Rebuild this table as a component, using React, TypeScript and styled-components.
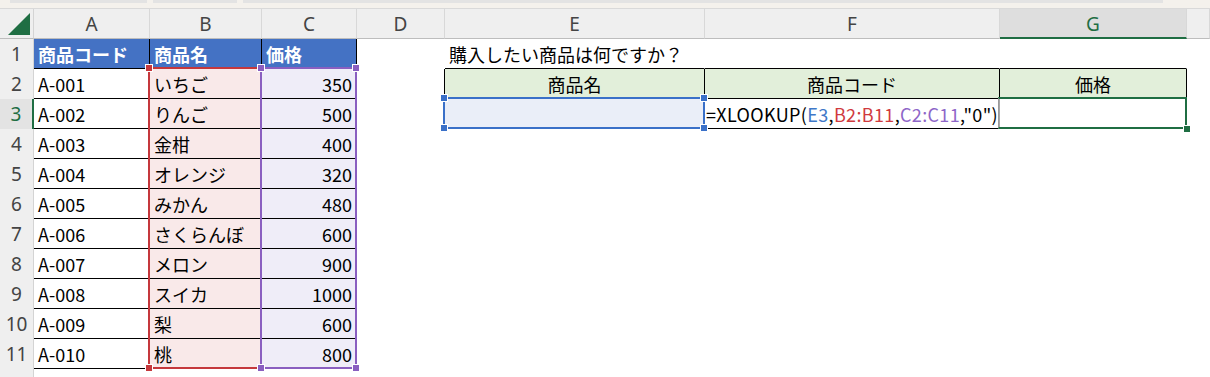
import React from 'react';
import styled, { createGlobalStyle } from 'styled-components';

const GlobalStyle = createGlobalStyle`
  html, body { margin: 0; padding: 0; background: #ffffff; }
  body {
    font-family: "Noto Sans CJK JP", "Noto Sans", sans-serif;
    overflow: hidden;
  }
`;

const GREEN = '#1f6e43';
const LINE = '#000000';

const Page = styled.div`
  display: flex;
  flex-direction: column;
  width: 1210px;
  height: 377px;
  overflow: hidden;
`;

const TopStrip = styled.div`
  flex: 0 0 auto;
  height: 8px;
  background: #f4f1ec;
  border-bottom: 1px solid #d9d9d9;
  display: flex;
  gap: 6px;
  padding-left: 10px;
`;

const StripTab = styled.div<{ $w: number }>`
  width: ${(p) => p.$w}px;
  height: 3px;
  background: #e3e3e3;
`;

const Sheet = styled.div`
  flex: 0 0 auto;
  display: grid;
  grid-template-columns: 34px 116px 112px 95px 88px 260px 295px 187px 1fr;
  grid-template-rows: repeat(13, 30px);
  position: relative;
  font-size: 18px;
  color: #000;
`;

/* every grid child sits at an explicit row/column so overlays can share the area */
const Placed = styled.div<{ $r: number; $c: number }>`
  grid-row: ${(p) => p.$r};
  grid-column: ${(p) => p.$c};
`;

const Corner = styled(Placed)`
  background: #efefef;
  border-right: 1px solid #d4d4d4;
  border-bottom: 1px solid #bdbdbd;
  display: flex;
  align-items: flex-end;
  justify-content: flex-end;
  padding: 0 3px 3px 0;
`;

const ColHeader = styled(Placed)<{ $selected?: boolean }>`
  background: ${(p) => (p.$selected ? '#dedede' : '#efefef')};
  border-right: 1px solid #d8d8d8;
  border-bottom: ${(p) => (p.$selected ? `2px solid ${GREEN}` : '1px solid #bdbdbd')};
  display: flex;
  align-items: center;
  justify-content: center;
  font-family: "Noto Sans", sans-serif;
  font-size: 19px;
  color: ${(p) => (p.$selected ? GREEN : '#444')};
  padding-top: 1px;
`;

const RowHeader = styled(Placed)<{ $selected?: boolean }>`
  background: ${(p) => (p.$selected ? '#e3e3e3' : '#efefef')};
  border-right: ${(p) => (p.$selected ? `2px solid ${GREEN}` : '1px solid #d4d4d4')};
  display: flex;
  align-items: center;
  justify-content: center;
  font-family: "Noto Sans", sans-serif;
  font-size: 19px;
  color: ${(p) => (p.$selected ? GREEN : '#444')};
`;

type Align = 'left' | 'center' | 'right';

const Cell = styled(Placed)<{
  $fill?: string;
  $right?: string;
  $bottom?: string;
  $align?: Align;
  $bold?: boolean;
  $ink?: string;
  $front?: boolean;
}>`
  background: ${(p) => p.$fill ?? '#ffffff'};
  border-right: 1px solid ${(p) => p.$right ?? 'transparent'};
  border-bottom: 1px solid ${(p) => p.$bottom ?? 'transparent'};
  display: flex;
  align-items: center;
  justify-content: ${(p) =>
    p.$align === 'right' ? 'flex-end' : p.$align === 'center' ? 'center' : 'flex-start'};
  padding: 0 4px;
  white-space: nowrap;
  overflow: visible;
  font-weight: ${(p) => (p.$bold ? 700 : 400)};
  color: ${(p) => p.$ink ?? '#000'};
  line-height: 1;
  min-width: 0;
  position: relative;
  z-index: ${(p) => (p.$front ? 2 : 1)};
`;

const Formula = styled.span`
  margin-left: -3px;
  letter-spacing: 0.35px;
`;

const Ref = styled.span<{ $ink: string }>`
  color: ${(p) => p.$ink};
`;

/* Overlays that sit on a range of cells: reference highlights and the active cell */
const RangeArea = styled.div<{ $col: number; $rows: [number, number] }>`
  grid-column: ${(p) => p.$col} / ${(p) => p.$col + 1};
  grid-row: ${(p) => p.$rows[0]} / ${(p) => p.$rows[1]};
  position: relative;
  pointer-events: none;
  z-index: 3;
`;

const Frame = styled.div<{ $color: string }>`
  position: absolute;
  top: -2px;
  left: -2px;
  right: 0;
  bottom: 0;
  border: 2px solid ${(p) => p.$color};
`;

const ActiveFrame = styled.div`
  position: absolute;
  top: -2px;
  left: -2px;
  right: 0;
  bottom: 0;
  border: 2px solid ${GREEN};
  border-left: 1px solid #9a9a9a;
`;

const Handle = styled.div<{ $color: string; $v: 'top' | 'bottom'; $h: 'left' | 'right' }>`
  position: absolute;
  width: 6px;
  height: 6px;
  background: ${(p) => p.$color};
  box-shadow: 0 0 0 1px #ffffff;
  ${(p) => (p.$v === 'top' ? 'top: -4px;' : 'bottom: -2px;')}
  ${(p) => (p.$h === 'left' ? 'left: -4px;' : 'right: -2px;')}
`;

const FillHandle = styled.div`
  position: absolute;
  width: 6px;
  height: 6px;
  right: -3px;
  bottom: -3px;
  background: ${GREEN};
  box-shadow: 0 0 0 1px #ffffff;
`;

const COLS = ['A', 'B', 'C', 'D', 'E', 'F', 'G', 'H'];

const products: [string, string, number][] = [
  ['A-001', 'いちご', 350],
  ['A-002', 'りんご', 500],
  ['A-003', '金柑', 400],
  ['A-004', 'オレンジ', 320],
  ['A-005', 'みかん', 480],
  ['A-006', 'さくらんぼ', 600],
  ['A-007', 'メロン', 900],
  ['A-008', 'スイカ', 1000],
  ['A-009', '梨', 600],
  ['A-010', '桃', 800],
];

const BLUE_HEAD = '#4472c4';
const PINK = '#f9e9e9';
const LAVENDER = '#efedf8';
const PALE_BLUE = '#eaeef8';
const PALE_GREEN = '#e2efda';

const RED = '#c5383c';
const PURPLE = '#8a5fc0';
const REF_BLUE = '#3a70c8';

type CellSpec = {
  text?: React.ReactNode;
  fill?: string;
  right?: string;
  bottom?: string;
  align?: Align;
  bold?: boolean;
  ink?: string;
  front?: boolean;
};

const formula = (
  <Formula>
    =XLOOKUP(<Ref $ink="#3f78c8">E3</Ref>,<Ref $ink="#d03a3e">B2:B11</Ref>,
    <Ref $ink="#8e66c8">C2:C11</Ref>,"0")
  </Formula>
);

function cellFor(row: number, col: number): CellSpec {
  // Product table A1:C11
  if (col <= 2 && row <= 11) {
    if (row === 1) {
      const heads = ['商品コード', '商品名', '価格'];
      return { text: heads[col], fill: BLUE_HEAD, right: LINE, bottom: LINE, bold: true, ink: '#ffffff' };
    }
    const [code, name, price] = products[row - 2];
    if (col === 0) return { text: code, right: LINE, bottom: LINE };
    if (col === 1) return { text: name, fill: PINK, right: LINE, bottom: LINE };
    return { text: price, fill: LAVENDER, right: LINE, bottom: LINE, align: 'right' };
  }
  // Lookup form E1:G3
  if (col === 3 && (row === 2 || row === 3)) return { right: LINE };
  if (row === 1 && col >= 4 && col <= 6) {
    return {
      text: col === 4 ? '購入したい商品は何ですか？' : undefined,
      bottom: LINE,
      front: col === 4,
    };
  }
  if (row === 2 && col >= 4 && col <= 6) {
    const heads = ['商品名', '商品コード', '価格'];
    return { text: heads[col - 4], fill: PALE_GREEN, right: LINE, bottom: LINE, align: 'center' };
  }
  if (row === 3) {
    if (col === 4) return { fill: PALE_BLUE, right: LINE, bottom: LINE };
    if (col === 5) return { text: formula, right: '#a8a8a8', bottom: LINE, front: true };
    if (col === 6) return { right: LINE, bottom: LINE };
  }
  return {};
}

const ROWS = Array.from({ length: 12 }, (_, i) => i + 1);

export default function App() {
  return (
    <>
      <GlobalStyle />
      <Page>
        <TopStrip>
          <StripTab $w={137} />
          <StripTab $w={84} />
          <StripTab $w={920} />
        </TopStrip>
        <Sheet>
          <Corner $r={1} $c={1}>
            <svg width="22" height="22" viewBox="0 0 22 22">
              <polygon points="22,0 22,22 0,22" fill={GREEN} />
            </svg>
          </Corner>
          {COLS.map((c, ci) => (
            <ColHeader key={c} $r={1} $c={ci + 2} $selected={c === 'G'}>
              {c === 'H' ? '' : c}
            </ColHeader>
          ))}
          {ROWS.map((r) => (
            <React.Fragment key={r}>
              <RowHeader $r={r + 1} $c={1} $selected={r === 3}>
                {r}
              </RowHeader>
              {COLS.map((_, ci) => {
                const s = cellFor(r, ci);
                return (
                  <Cell
                    key={ci}
                    $r={r + 1}
                    $c={ci + 2}
                    $fill={s.fill}
                    $right={s.right}
                    $bottom={s.bottom}
                    $align={s.align}
                    $bold={s.bold}
                    $ink={s.ink}
                    $front={s.front}
                  >
                    {s.text}
                  </Cell>
                );
              })}
            </React.Fragment>
          ))}

          <RangeArea $col={3} $rows={[3, 13]}>
            <Frame $color={RED} />
            <Handle $color={RED} $v="top" $h="left" />
            <Handle $color={RED} $v="bottom" $h="left" />
          </RangeArea>
          <RangeArea $col={4} $rows={[3, 13]}>
            <Frame $color={PURPLE} />
            <Handle $color={PURPLE} $v="top" $h="left" />
            <Handle $color={PURPLE} $v="top" $h="right" />
            <Handle $color={PURPLE} $v="bottom" $h="left" />
            <Handle $color={PURPLE} $v="bottom" $h="right" />
          </RangeArea>
          <RangeArea $col={6} $rows={[4, 5]}>
            <Frame $color={REF_BLUE} />
            <Handle $color={REF_BLUE} $v="top" $h="left" />
            <Handle $color={REF_BLUE} $v="top" $h="right" />
            <Handle $color={REF_BLUE} $v="bottom" $h="left" />
            <Handle $color={REF_BLUE} $v="bottom" $h="right" />
          </RangeArea>
          <RangeArea $col={8} $rows={[4, 5]}>
            <ActiveFrame />
            <FillHandle />
          </RangeArea>
        </Sheet>
      </Page>
    </>
  );
}
